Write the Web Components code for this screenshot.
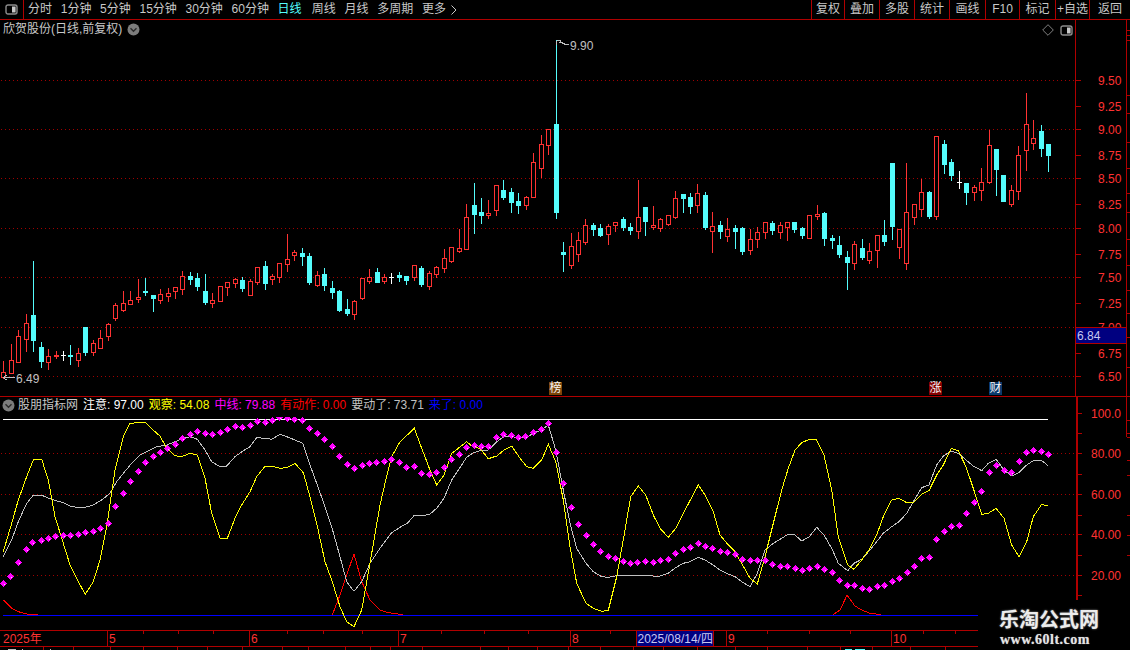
<!DOCTYPE html>
<html lang="zh">
<head>
<meta charset="utf-8">
<title>欣贺股份</title>
<style>
html,body{margin:0;padding:0;background:#000;}
body{width:1130px;height:650px;overflow:hidden;font:12px "Liberation Sans","Noto Sans CJK SC",sans-serif;color:#c8c8c8;}
</style>
</head>
<body>
<tdx-app>
  <tdx-toolbar>
    <tdx-tab>分时</tdx-tab><tdx-tab>1分钟</tdx-tab><tdx-tab>5分钟</tdx-tab><tdx-tab>15分钟</tdx-tab><tdx-tab>30分钟</tdx-tab><tdx-tab>60分钟</tdx-tab><tdx-tab active>日线</tdx-tab><tdx-tab>周线</tdx-tab><tdx-tab>月线</tdx-tab><tdx-tab>多周期</tdx-tab><tdx-tab more>更多</tdx-tab>
    <tdx-action slot="actions" style="--w:33px">复权</tdx-action><tdx-action slot="actions" style="--w:35px">叠加</tdx-action><tdx-action slot="actions" style="--w:35px">多股</tdx-action><tdx-action slot="actions" style="--w:35px">统计</tdx-action><tdx-action slot="actions" style="--w:36px">画线</tdx-action><tdx-action slot="actions" style="--w:34px">F10</tdx-action><tdx-action slot="actions" style="--w:36px">标记</tdx-action><tdx-action slot="actions" style="--w:34px">+自选</tdx-action><tdx-action slot="actions" style="--w:41px">返回</tdx-action>
  </tdx-toolbar>
  <price-pane>
    <signal-tag style="left:549px;top:362px;--bg:#7c4408">榜</signal-tag>
    <signal-tag style="left:929px;top:362px;--bg:#860000">涨</signal-tag>
    <signal-tag style="left:989px;top:362px;--bg:#0a3a6c">财</signal-tag>
  </price-pane>
  <indicator-pane>
    <legend-item style="--c:#ffffff">注意: 97.00</legend-item>
    <legend-item style="--c:#ffff00">观察: 54.08</legend-item>
    <legend-item style="--c:#ff00ff">中线: 79.88</legend-item>
    <legend-item style="--c:#ff0000">有动作: 0.00</legend-item>
    <legend-item style="--c:#c0c0c0">要动了: 73.71</legend-item>
    <legend-item style="--c:#0000ff">来了: 0.00</legend-item>
  </indicator-pane>
  <time-axis></time-axis>
  <site-mark></site-mark>
</tdx-app>
<script>
const FONT = '"Liberation Sans","Noto Sans CJK SC",sans-serif';
const LINE = '#b00000', RED = '#ff3232', CYAN = '#54fcfc';
const PANEL_ICON = `<svg width="13" height="11" viewBox="0 0 13 11"><rect x="1" y="1" width="11" height="9" rx="2" fill="#000" stroke="#8c8c8c" stroke-width="1.4"/><rect x="7" y="2.5" width="3.6" height="6" fill="#c8c8c8"/></svg>`;
const CHEVRON = `<svg width="13" height="13" viewBox="0 0 13 13"><circle cx="6.5" cy="6.5" r="6" fill="#7c7c7c"/><path d="M3.5 5.2 6.5 8.2 9.5 5.2" fill="none" stroke="#2a2a2a" stroke-width="1.4"/></svg>`;

function define(name, css, html, extra) {
  customElements.define(name, class extends HTMLElement {
    constructor() {
      super();
      this.attachShadow({mode: 'open'}).innerHTML = `<style>${css}</style>${html}`;
      if (extra) extra(this.shadowRoot, this);
    }
  });
}

define('tdx-app', `:host{display:grid;grid-template-rows:20px 377px 233px 20px;width:1130px;height:650px;position:relative;overflow:hidden;background:#000}`, `<slot></slot>`);

define('tdx-toolbar', `
  :host{display:flex;height:20px;box-sizing:border-box;border-bottom:1px solid ${LINE};background:#000}
  .corner{flex:0 0 23px;border-right:1px solid ${LINE};display:flex;align-items:center;justify-content:center;padding-left:0}
  .corner svg{display:block;margin-top:-1px}
  .tabs{flex:1;display:flex;gap:8.7px;padding-left:4px;align-items:center}
  .actions{display:flex;height:19px}
`, `<div class="corner">${PANEL_ICON}</div><div class="tabs"><slot></slot></div><div class="actions"><slot name="actions"></slot></div>`);

define('tdx-tab', `
  :host{display:inline-flex;align-items:center;gap:5px;color:#c8c8c8;white-space:nowrap;line-height:19px}
  :host([active]){color:${CYAN};margin-right:1.5px}
  svg{display:none}
  :host([more]) svg{display:block}
`, `<slot></slot><svg width="6" height="10" viewBox="0 0 6 10"><path d="M.5 .5 5 5 .5 9.5" fill="none" stroke="#c8c8c8"/></svg>`);

define('tdx-action', `
  :host{display:flex;align-items:center;justify-content:center;width:var(--w);box-sizing:border-box;border-left:1px solid ${LINE};color:#c8c8c8;white-space:nowrap;line-height:19px}
`, `<slot></slot>`);

define('signal-tag', `
  :host{position:absolute;z-index:2;display:flex;align-items:center;justify-content:center;width:13px;height:13px;background:var(--bg);color:#f4f4f4;font-size:12px;line-height:13px}
`, `<slot></slot>`);

define('legend-item', `:host{color:var(--c);white-space:pre}`, `<slot></slot>`);

/* ---------- candles: [kind, wickTop, bodyTop, bodyBottom, wickBottom], in 3x crop coords ---------- */
const SETS = [
 [250, `r 333 367 381 385|r 282 331 368 370|r 240 259 335 335|r 192 220 268 303|c 33 195 270 303|c 277 291 333 351|r 297 319 335 357|r 304 315 317 324|w 303 316 317 330|c 285 315 317 342|r 294 310 329 348|c 231 231 306 315|r 270 280 305 315|r 240 265 293 293|r 220 223 257 270|r 160 165 203 210|r 123 160 179 183|r 123 151 161 161|r 87 141 147 156|c 84 123 125 135|c 135 135 144 183|r 117 133 149 159|r 113 130 137 153|r 111 112 122 144|r 63 79 116 132|c 66 78 87 102|c 69 84 108 120|c 72 123 156 162|r 129 151 158 171|r 109 109 153 153|r 96 96 110 135|r 84 88 98 111|c 82 90 114 123|r 87 94 135 135|r 51 52 96 102|c 33 48 99 117|r 72 78 87 102|r 39 40 82 96`],
 [170, `r 192 267 281 303|r 240 247 254 270|c 234 249 258 285|c 249 258 336 342|r 303 316 345 348|c 294 312 345 360|c 333 354 366 384|c 360 363 420 423|c 387 417 429 435|r 390 393 431 447|r 324 325 384 387|r 297 322 332 339|c 294 306 336 336|r 312 322 332 339|w 309 322 323 339|c 306 315 321 333|c 318 318 330 342|r 285 286 320 330|c 288 294 342 348|r 303 310 347 357|r 288 292 311 321|r 237 265 293 306|r 232 232 272 275|r 177 235 243 246|r 102 142 236 237|c 39 105 132 189|c 84 126 135 159|r 90 129 134 144|r 46 46 119 135|c 30 60 81 87|c 54 66 96 126|c 69 93 105 129|r 78 82 104 117|r -51 -24 80 80`],
 [30, `r 315 343 413 441|r 298 298 344 372|c 30 282 545 564|c 636 667 671 723|r 609 649 704 714|r 606 631 671 693|r 567 586 635 642|c 579 585 597 615|c 582 594 615 618|r 582 589 611 642|r 576 577 584 603|c 561 567 591 600|c 579 591 600 612|r 450 562 602 624|c 531 531 573 615|r 528 586 591 597|r 564 568 593 603|r 555 556 581 584|r 483 505 560 564|c 492 492 504 546|c 489 501 528 549|r 462 490 524 546|c 486 495 591 597|r 546 589 602 666|c 573 585 603 624|r 564 598 617 633|c 585 594 603 654|c 591 594 663 672|r 597 628 659 672|r 591 607 628 651|r 576 577 607 624|c 573 579 600 612|r 576 586 605 624|r 576 577 590 630|c 576 576 597 606|c 591 594 615 624|r 556 556 623 623|r 525 552 557 567|c 546 549 624 645`],
 [80, `c 465 473 480 504|c 468 495 522 531|c 513 531 546 627|r 483 492 548 567|c 477 504 531 537|r 489 514 539 549|r 466 466 509 561|c 420 465 483 495|c 249 249 438 477|r 447 447 500 534|r 249 397 548 567|r 372 373 412 432|r 297 337 386 408|c 333 336 408 414|r 169 169 407 417|c 180 192 252 279|c 237 246 285 300|w 273 307 309 324|c 309 309 336 372|r 315 322 335 360|r 264 307 331 360|r 149 196 307 309|c 207 207 267 345|c 285 285 363 363|r 315 331 371 378|r 198 226 334 357|r 39 133 211 270|r 120 175 190 207|c 135 153 204 228|c 192 192 225 273`]
];
const CANDLES = [];
SETS.forEach(([oy, s]) => s.split('|').forEach(e => {
  const p = e.split(' ');
  CANDLES.push({k: p[0], v: p.slice(1).map(n => Math.round(oy + (+n) / 3))});
}));

function candleSvg() {
  let o = '';
  CANDLES.forEach((d, i) => {
    const x = Math.round(3.3 + 7.464 * i), [wt, bt, bb, wb] = d.v;
    const col = d.k === 'r' ? RED : d.k === 'c' ? CYAN : '#ffffff';
    o += `<line x1="${x + .5}" x2="${x + .5}" y1="${wt}" y2="${wb + 1}" stroke="${col}"/>`;
    const h = bb - bt;
    if (d.k === 'w') {
      o += `<rect x="${x - 2}" y="${bt}" width="5" height="1" fill="${col}"/>`;
    } else if (h < 2) {
      o += `<rect x="${x - 2}" y="${bt}" width="5" height="2" fill="${col}"/>`;
    } else if (d.k === 'r') {
      o += `<rect x="${x - 1.5}" y="${bt + .5}" width="4" height="${h}" fill="#000" stroke="${col}"/>`;
    } else {
      o += `<rect x="${x - 2}" y="${bt}" width="5" height="${h + 1}" fill="${col}"/>`;
    }
  });
  return o;
}
const dotted = (ys, w) => ys.map(y => `<line x1="1" x2="${w}" y1="${y + .5}" y2="${y + .5}" stroke="#a00000" stroke-dasharray="1 3"/>`).join('');
const ticks = (x1, x2, ys, c) => ys.map(y => `<line x1="${x1}" x2="${x2}" y1="${y + .5}" y2="${y + .5}" stroke="${c}"/>`).join('');
const label = (t, x, y, fill, anchor) => `<text x="${x}" y="${y}" fill="${fill}" ${anchor ? `text-anchor="${anchor}"` : ''} font-size="12">${t}</text>`;

const PRICE_ROWS = [['9.50', 80], ['9.25', 106], ['9.00', 129], ['8.75', 155], ['8.50', 178], ['8.25', 204], ['8.00', 228], ['7.75', 254], ['7.50', 277], ['7.25', 303], ['7.00', 327], ['6.75', 353], ['6.50', 376]];

define('price-pane', `
  :host{display:flex;position:relative;box-sizing:border-box;height:377px;border-bottom:1px solid ${LINE};background:#000}
  svg{display:block;font-family:${FONT}}
  .chart{flex:0 0 1075px}
  .axis{flex:0 0 55px}
  .title{position:absolute;left:3px;top:2px;display:flex;align-items:center;gap:5px;line-height:15px;white-space:nowrap;color:#c8c8c8}
  .title svg{margin-top:0}
  .tools{position:absolute;left:1042px;top:4px;display:flex;align-items:center;gap:6px}
`, `
  <svg class="chart" width="1075" height="376" viewBox="0 20 1075 376" shape-rendering="crispEdges">
    ${dotted([80, 129, 178, 228, 277, 327, 376], 1075)}
    ${candleSvg()}
    <path d="M3.5 377.5H15M3.5 377.5l3-2.5M3.5 377.5l3 2.5" fill="none" stroke="#c0c0c0"/>
    ${label('6.49', 16, 383, '#c0c0c0')}
    <path d="M556.5 40.5h4v1M556.5 40.5v4M558.5 42.5l3 0 3 1.5 4 0" fill="none" stroke="#c0c0c0"/>
    ${label('9.90', 570, 50, '#c0c0c0')}
  </svg>
  <svg class="axis" width="55" height="376" viewBox="1075 20 55 376" shape-rendering="crispEdges">
    <line x1="1075.5" x2="1075.5" y1="20" y2="396" stroke="${LINE}"/>
    <line x1="1126.5" x2="1126.5" y1="20" y2="396" stroke="${LINE}"/>
    ${ticks(1076, 1081, PRICE_ROWS.map(r => r[1]), LINE)}
    ${ticks(1127, 1130, [30, 35, 40, 95, 113, 142, 168, 193, 212, 239, 265, 290, 313, 337, 367], LINE)}
    <g shape-rendering="auto">${PRICE_ROWS.map(r => label(r[0], 1098, r[1] + 5, RED)).join('')}</g>
    <rect x="1076" y="327" width="50" height="16" fill="#000080"/>
    <line x1="1076" x2="1126" y1="327.5" y2="327.5" stroke="${LINE}"/>
    <line x1="1076" x2="1126" y1="343.5" y2="343.5" stroke="${LINE}"/>
    <g shape-rendering="auto">${label('6.84', 1077, 340, '#c8c8f0')}</g>
  </svg>
  <div class="title"><span>欣贺股份(日线,前复权)</span>${CHEVRON}</div>
  <div class="tools">
    <svg width="12" height="12" viewBox="0 0 12 12"><path d="M6 .7 11.3 6 6 11.3 .7 6Z" fill="none" stroke="#808080"/></svg>
    ${PANEL_ICON}
  </div>
  <slot></slot>
`);

/* ---------- indicator series ---------- */
function series(groups) {
  const out = [];
  groups.forEach(([ox, s]) => s.trim().split(/\s+/).forEach(p => {
    const [a, b] = p.split(',').map(Number);
    out.push([+(ox + a / 3).toFixed(1), +(400 + b / 3).toFixed(1)]);
  }));
  return out;
}
const YELLOW = series([
 [0, `10,455 35,370 55,300 80,230 100,180 125,178 145,240 165,350 190,430 210,495 235,545 256,583 280,545 300,480 320,380 345,210 370,110 390,70 435,67 470,100 480,108 500,145 525,167 545,170 570,160 592,165 615,235 635,340 660,415 682,415 705,355 725,315 750,275 770,230 795,199 815,199 840,205 860,203 885,190 910,218 930,290 950,370 975,485 995,540 1020,620 1040,665 1062,680 1085,630 1110,490`],
 [380, `0,315 15,250 35,170 60,125 82,105 103,85 125,145 150,210 170,255 192,225 215,160 235,145 260,125 280,142 300,145 325,176 350,168 372,150 395,138 420,175 440,200 460,205 485,180 505,133 527,185 550,300 570,440 590,550 618,610 640,625 665,634 685,631 710,530 735,390 752,290 775,258 797,285 820,345 840,385 865,412 887,385 910,340 955,255 975,285 1000,335 1020,405 1045,435 1065,455 1085,490 1110,535`],
 [750, `0,535 22,552 45,470 70,370 95,270 115,205 135,150 155,128 178,118 200,120 222,165 245,270 265,410 293,495 312,508 335,480 360,445 380,405 400,350 425,300 447,295 470,308 490,308 515,283 537,272 560,225 580,195 604,145 625,152 648,200 670,265 695,343 715,340 738,325 762,355 785,435 807,470 830,425 850,350 875,313 893,318`]
]);
const GRAY = series([
 [0, `10,470 35,420 55,365 80,310 100,286 125,286 150,296 170,303 190,308 210,318 230,322 256,322 280,315 305,300 330,280 350,245 370,220 395,190 420,165 445,152 470,140 500,135 525,125 550,115 570,110 592,118 615,150 635,185 660,200 680,198 705,170 730,152 750,140 770,113 795,115 815,118 840,103 860,110 885,120 908,130 930,195 950,250 975,320 995,380 1020,470 1040,545 1062,574 1085,545 1110,490`],
 [380, `0,445 35,398 60,382 82,370 103,346 125,348 150,342 170,325 192,295 215,240 235,210 260,172 280,158 300,152 325,150 350,125 372,110 395,110 420,113 440,112 460,100 485,90 505,75 527,150 550,270 570,370 590,445 618,490 640,515 665,530 685,532 710,527 735,526 752,528 775,525 797,525 820,528 840,528 865,520 887,503 910,490 930,485 955,472 975,480 1000,495 1020,510 1045,522 1065,530 1085,545 1110,560`],
 [750, `0,560 22,520 45,450 70,430 95,415 115,402 135,405 155,423 178,410 200,382 222,405 245,445 265,490 293,512 312,490 335,478 360,450 380,425 400,400 425,380 447,365 470,340 490,305 515,263 537,255 560,195 580,168 604,153 625,160 648,180 670,198 695,212 715,190 738,178 762,210 785,228 807,218 830,195 850,182 875,182 893,196`]
]);
const DOTS = series([
 [0, `10,549 32,528 55,486 78,447 98,426 123,420 145,416 165,410 189,407 210,405 234,402 255,398 279,393 300,384 324,369 345,318 369,279 390,243 414,213 435,186 459,170 480,156 501,144 525,132 546,114 570,102 591,93 615,99 636,102 660,96 681,87 705,78 726,81 750,75 771,63 795,67 816,60 837,51 861,54 882,57 906,60 927,84 951,99 972,117 996,138 1017,168 1041,192 1062,204 1086,195 1107,189 1128,186`],
 [380, `12,183 33,177 57,186 78,201 102,198 123,219 147,222 168,216 192,201 213,177 237,162 258,141 282,137 303,138 324,138 348,111 369,104 393,105 414,111 437,108 459,96 483,87 504,69 528,156 549,249 573,321 594,372 618,405 639,432 660,453 684,468 705,474 729,483 750,489 773,486 795,483 819,486 840,480 864,477 885,459 909,447 930,441 954,429 975,438 996,444 1020,453 1041,456 1065,462 1086,477 1110,480 1131,480`],
 [750, `21,480 45,480 66,492 90,498 111,498 135,504 156,510 177,504 201,498 222,507 246,516 267,540 291,555 312,555 336,564 357,567 381,558 402,555 426,543 447,534 471,516 492,498 513,474 537,471 558,417 582,393 603,378 627,375 648,339 672,306 693,273 717,216 738,195 762,210 783,216 807,183 828,156 849,150 873,153 894,162`]
]);
const REDS = [
 series([[0, `10,600 35,625 55,635 80,642 113,644`]]),
 series([[0, `997,645 1020,585 1040,525 1062,462 1085,545 1110,600 1140,630`], [380, `25,638 70,644`]]),
 series([[750, `248,645 270,630 291,586 315,618 335,630 360,640 393,644`]])
];
const poly = (pts, c) => `<polyline points="${pts.map(p => p.join(',')).join(' ')}" fill="none" stroke="${c}"/>`;
const dot = ([x, y]) => {
  const px = Math.floor(x) + .5, py = Math.floor(y) + .5;
  return `<polygon points="${px},${py - 3.7} ${px + 3.7},${py} ${px},${py + 3.7} ${px - 3.7},${py}" fill="#ff00ff"/><rect x="${px}" y="${py}" width="1" height="1" fill="#ffd0ff"/>`;
};
const IND_ROWS = [['100.0', 413], ['80.00', 453], ['60.00', 494], ['40.00', 534], ['20.00', 575]];

define('indicator-pane', `
  :host{display:flex;position:relative;height:233px;background:#000}
  svg{display:block;font-family:${FONT}}
  .chart{flex:0 0 1076px}
  .axis{flex:0 0 54px}
  .legend{position:absolute;left:2px;top:1px;display:flex;align-items:center;gap:5px;line-height:15px;white-space:pre}
  .legend svg{margin-right:-2px}
  .name{color:#c8c8c8}
`, `
  <svg class="chart" width="1076" height="233" viewBox="0 397 1076 233" shape-rendering="crispEdges">
    <defs><clipPath id="top"><rect x="0" y="417" width="1076" height="213"/></clipPath></defs>
    ${dotted([453, 494, 534, 575], 1076)}
    <line x1="3" x2="1048" y1="419.5" y2="419.5" stroke="#ffffff"/>
    <line x1="3" x2="1076" y1="615.5" y2="615.5" stroke="#0000ff"/>
    ${REDS.map(r => poly(r, '#ff0000')).join('')}
    ${poly(GRAY, '#c0c0c0')}
    ${poly(YELLOW, '#ffff00')}
    <g clip-path="url(#top)">${DOTS.map(dot).join('')}</g>
  </svg>
  <svg class="axis" width="54" height="233" viewBox="1076 397 54 233" shape-rendering="crispEdges">
    <rect x="1076" y="397" width="2" height="233" fill="${LINE}"/>
    <line x1="1126.5" x2="1126.5" y1="397" y2="437" stroke="${LINE}"/>
    ${ticks(1078, 1082, [413, 433, 453, 474, 494, 515, 534, 555, 575, 595], LINE)}
    ${ticks(1127, 1130, [420, 433, 437, 460, 475, 515, 535, 555], LINE)}
    <g shape-rendering="auto">${IND_ROWS.map(r => label(r[0], 1091, r[1] + 5, RED)).join('')}</g>
  </svg>
  <div class="legend">${CHEVRON}<span class="name">股朋指标网</span><slot></slot></div>
`);

const SEPS = [[107, '5'], [249, '6'], [398, '7'], [570, '8'], [726, '9'], [891, '10']];
const UP = [143, 178, 213, 287, 323, 362, 441, 484, 528, 610, 767, 809, 850, 923, 955];
const DOWN = [43, 73, 110, 143, 177, 207, 242, 282, 308, 345, 370, 390, 422, 480, 508, 537, 568, 600, 633, 663, 697, 735, 767, 807, 840, 872, 910, 945];
define('time-axis', `
  :host{display:block;height:20px;background:#000}
  svg{display:block;font-family:${FONT}}
`, `
  <svg width="1130" height="20" viewBox="0 630 1130 20" shape-rendering="crispEdges">
    <line x1="0" x2="1130" y1="630.5" y2="630.5" stroke="${LINE}"/>
    <line x1="0" x2="1130" y1="646.5" y2="646.5" stroke="${LINE}"/>
    ${SEPS.map(([x]) => `<line x1="${x + .5}" x2="${x + .5}" y1="630" y2="647" stroke="${LINE}"/>`).join('')}
    ${UP.map(x => `<line x1="${x + .5}" x2="${x + .5}" y1="630" y2="634" stroke="${LINE}"/>`).join('')}
    ${DOWN.map(x => `<line x1="${x + .5}" x2="${x + .5}" y1="646" y2="650" stroke="${LINE}"/>`).join('')}
    <path d="M8 649.5h8M22 649.5h1M50 649.5h1" stroke="#c0c0c0"/>
    <path d="M845 649.5h7M855 649.5h10" stroke="${CYAN}"/>
    <rect x="636.5" y="630.5" width="77" height="16" fill="#000080" stroke="${LINE}"/>
    <g shape-rendering="auto">
      ${label('2025年', 3, 643, RED)}
      ${SEPS.map(([x, t]) => label(t, x + 2, 643, RED)).join('')}
      ${label('2025/08/14/四', 637.5, 643, '#c8c8f0')}
    </g>
  </svg>
`);

define('site-mark', `
  :host{position:absolute;right:0;bottom:0;width:152px;height:50px;z-index:3;background:#000;display:flex;flex-direction:column;align-items:flex-start;padding:8px 0 0 21px;box-sizing:border-box}
  .cn{font:700 20px/22px "Noto Sans CJK SC",sans-serif;color:#ececec;text-shadow:0 0 2px #9a9a9a;white-space:nowrap;margin-left:0}
  .en{font:700 14px/16px "Liberation Serif",serif;letter-spacing:.5px;color:#e4e4e4;text-shadow:0 0 1px #8a8a8a;white-space:nowrap;margin:2px 0 0 1px}
`, `<div class="cn">乐淘公式网</div><div class="en">www.60lt.com</div>`);
</script>
</body>
</html>
